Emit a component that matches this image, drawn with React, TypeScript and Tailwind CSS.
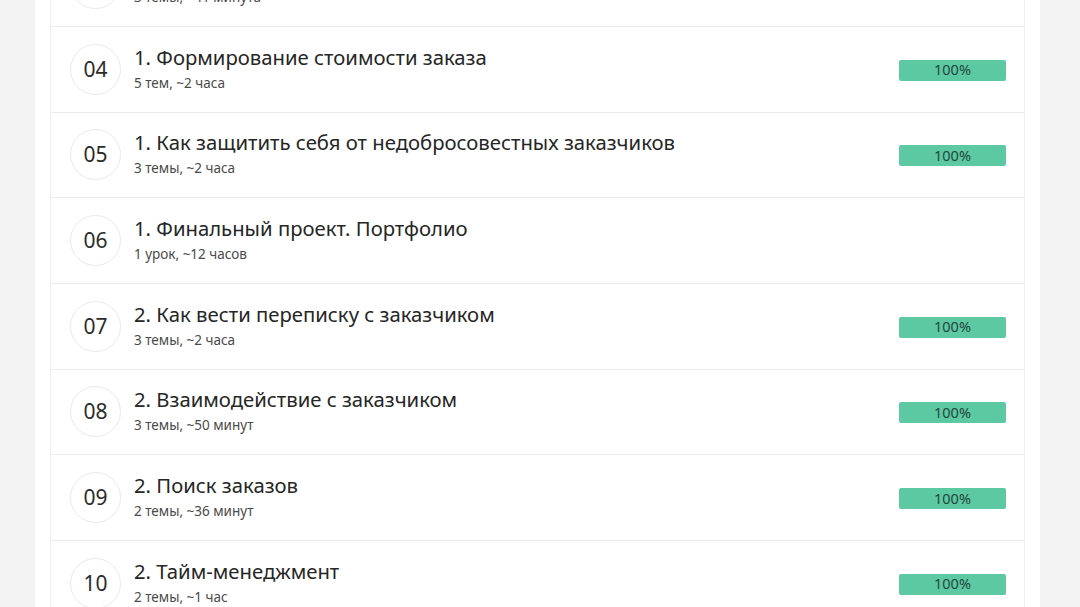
import React from 'react'

interface Lesson {
  num: string
  title: string
  meta: string
  progress?: number
}

const lessons: Lesson[] = [
  { num: '03', title: '1. Как общаться с заказчиком', meta: '3 темы, ~41 минута', progress: 100 },
  { num: '04', title: '1. Формирование стоимости заказа', meta: '5 тем, ~2 часа', progress: 100 },
  { num: '05', title: '1. Как защитить себя от недобросовестных заказчиков', meta: '3 темы, ~2 часа', progress: 100 },
  { num: '06', title: '1. Финальный проект. Портфолио', meta: '1 урок, ~12 часов' },
  { num: '07', title: '2. Как вести переписку с заказчиком', meta: '3 темы, ~2 часа', progress: 100 },
  { num: '08', title: '2. Взаимодействие с заказчиком', meta: '3 темы, ~50 минут', progress: 100 },
  { num: '09', title: '2. Поиск заказов', meta: '2 темы, ~36 минут', progress: 100 },
  { num: '10', title: '2. Тайм-менеджмент', meta: '2 темы, ~1 час', progress: 100 },
]

const LessonRow: React.FC<{ lesson: Lesson }> = ({ lesson }) => (
  <div className="flex h-[85.67px] items-center border-b border-[#ececec] pl-[19px] pr-[18px]">
    <div className="flex h-[51px] w-[51px] shrink-0 items-center justify-center rounded-full border border-[#e9e9e9] text-[21px] text-[#2b2b2b]">
      {lesson.num}
    </div>
    <div className="ml-[13px] flex-1 -mt-[1px]">
      <div className="-mt-[1px] text-[20.3px] leading-[26px] text-[#262626]">{lesson.title}</div>
      <div className="mt-[3px] text-[13.5px] leading-[20px] text-[#4a4a4a]">{lesson.meta}</div>
    </div>
    {lesson.progress !== undefined && (
      <div className="mt-[2px] flex h-[21px] w-[107px] items-center justify-center rounded-[2px] bg-[#5dc9a3] text-[14.5px] text-[#24463b]">
        {lesson.progress}%
      </div>
    )}
  </div>
)

export default function App() {
  return (
    <div
      className="h-[607px] overflow-hidden bg-[#f3f3f3]"
      style={{ fontFamily: '"Noto Sans", "Open Sans", sans-serif' }}
    >
      <div className="ml-[35px] flow-root w-[1005px] bg-white px-[15px]">
        <div className="-mt-[58.67px] border-x border-[#f0f0f0]">
          {lessons.map((l) => (
            <LessonRow key={l.num} lesson={l} />
          ))}
        </div>
      </div>
    </div>
  )
}
